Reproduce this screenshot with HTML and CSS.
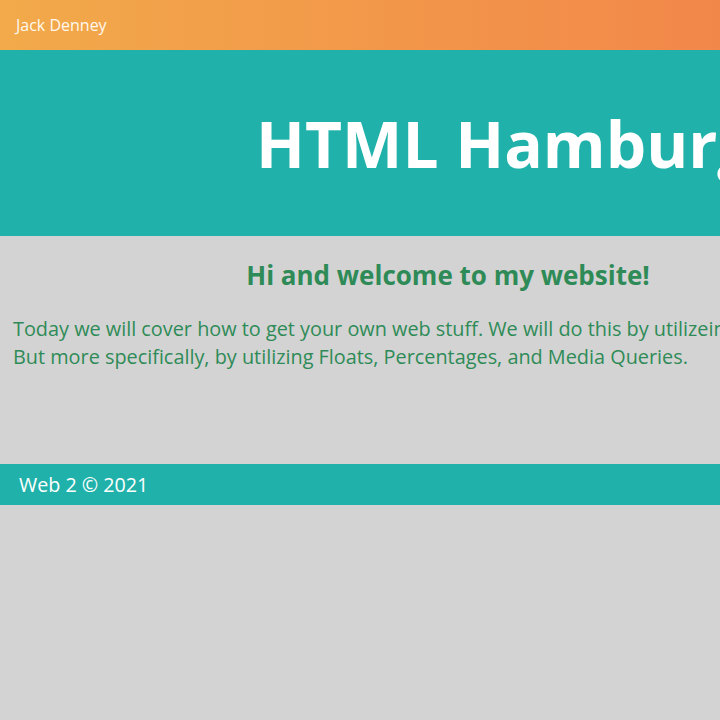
FILE: index.html
```html
<!DOCTYPE html>
<html lang="en">
<head>
<meta charset="utf-8">
<title>HTML Hamburger</title>
<link rel="stylesheet" href="styles.css">
</head>
<body>
  <nav class="topbar">
    <span class="brand">Jack Denney</span>
  </nav>
  <div class="page">
    <header class="hero">
      <h1 class="hero-title">HTML Hamburger</h1>
    </header>
    <main class="content">
      <h2 class="welcome">Hi and welcome to my website!</h2>
      <p class="intro">Today we will cover how to get your own web stuff. We will do this by utilizeing HTML and CSS.<br>But more specifically, by utilizing Floats, Percentages, and Media Queries.</p>
    </main>
    <footer class="footer">Web 2 © 2021</footer>
  </div>
</body>
</html>
```
FILE: styles.css
```css
html, body {
  margin: 0;
  padding: 0;
  overflow: hidden;
  background: #d3d3d3;
  font-family: "Open Sans", "Noto Sans", sans-serif;
}

.topbar {
  width: 100vw;
  height: 50px;
  line-height: 50px;
  padding-left: 16px;
  box-sizing: border-box;
  background: linear-gradient(90deg, #f2aa4a 0%, #f2874a 100%);
}

.brand {
  color: #fff8ee;
  font-size: 16px;
}

.page {
  width: 896px;
}

.hero {
  height: 186px;
  display: flex;
  align-items: center;
  background: #20b2aa;
}

.hero-title {
  margin: 0;
  padding-left: 256px;
  white-space: nowrap;
  color: #ffffff;
  font-size: 64px;
  font-weight: 700;
  line-height: normal;
}

.content {
  height: 228px;
  box-sizing: border-box;
  padding: 21px 13px 0;
}

.welcome {
  margin: 0;
  text-align: center;
  color: #2e8b57;
  font-size: 26px;
  font-weight: 700;
  line-height: normal;
}

.intro {
  margin: 22px 0 0;
  color: #2e8b57;
  font-size: 19.85px;
  line-height: 28px;
  white-space: nowrap;
}

.footer {
  height: 41px;
  line-height: 41px;
  padding-left: 19px;
  background: #20b2aa;
  color: #ffffff;
  font-size: 19.7px;
}
```
